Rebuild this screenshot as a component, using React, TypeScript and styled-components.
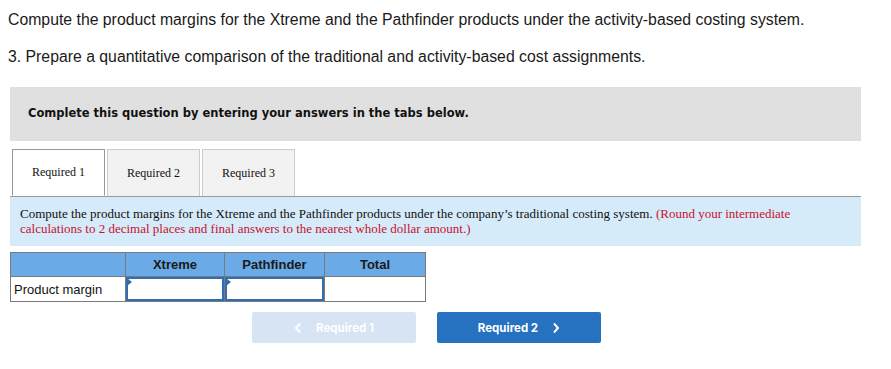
import styled, { createGlobalStyle } from 'styled-components';

const GlobalStyle = createGlobalStyle`
    body {
        margin: 0;
        background: #fff;
        color: #222;
    }
`;

const Page = styled.div`
    width: 851px;
    padding: 10px 30px 20px 10px;
`;

const Prompt = styled.p`
    margin: 0 0 17px -2px;
    font-family: "Liberation Sans", Arial, sans-serif;
    font-size: 15.8px;
    line-height: 20px;
    color: #1a1a1a;
`;

const Banner = styled.div`
    margin-top: 20px;
    height: 54px;
    background: #e0e0e0;
    display: flex;
    align-items: center;
    padding-left: 18px;
    padding-bottom: 2px;
    box-sizing: border-box;
    font-family: "DejaVu Sans", Verdana, sans-serif;
    font-weight: bold;
    font-size: 11.5px;
    color: #111;
`;

const TabBar = styled.div`
    display: flex;
    gap: 2px;
    margin-top: 8px;
    padding-left: 2px;
    border-bottom: 1px solid #999;
`;

const Tab = styled.div<{ $active?: boolean }>`
    width: 93px;
    height: 47px;
    box-sizing: border-box;
    display: flex;
    align-items: center;
    justify-content: center;
    font-family: "Liberation Serif", "Times New Roman", serif;
    font-size: 12px;
    color: #111;
    background: ${(p) => (p.$active ? '#fff' : '#f2f2f2')};
    border: 1px solid ${(p) => (p.$active ? '#999' : '#ccc')};
    border-bottom: ${(p) => (p.$active ? '1px solid #fff' : 'none')};
    margin-bottom: ${(p) => (p.$active ? '-1px' : '0')};
`;

const Instructions = styled.div`
    background: #d6ebf9;
    padding: 9px 10px 10px 10px;
    font-family: "Liberation Serif", "Times New Roman", serif;
    font-size: 13px;
    line-height: 15px;
    color: #111;
`;

const Hint = styled.span`
    color: #c8102e;
`;

const Table = styled.table`
    margin-top: 6px;
    border-collapse: collapse;
    font-family: "Liberation Sans", Arial, sans-serif;
    font-size: 13px;
`;

const HeadCell = styled.th<{ $w: number }>`
    width: ${(p) => p.$w}px;
    height: 24px;
    box-sizing: border-box;
    padding: 0;
    background: #6aaae6;
    border: 1.5px solid #7a7a7a;
    font-weight: bold;
    color: #1a1a1a;
    text-align: center;
`;

const LabelCell = styled.td`
    height: 24px;
    padding: 0 3px;
    border: 1.5px solid #7a7a7a;
    color: #111;
    white-space: nowrap;
`;

const Cell = styled.td`
    height: 24px;
    padding: 0;
    border: 1.5px solid #7a7a7a;
`;

const InputBox = styled.div`
    position: relative;
    height: 24px;
    box-sizing: border-box;
    border: 2px solid #2f6db5;

    &::before {
        content: '';
        position: absolute;
        top: -1px;
        left: -1px;
        border-top: 4px solid transparent;
        border-bottom: 4px solid transparent;
        border-left: 5px solid #2f6db5;
    }
`;

const NavRow = styled.div`
    display: flex;
    gap: 21px;
    margin-top: 10px;
    padding-left: 242px;
`;

const NavButton = styled.button<{ $disabled?: boolean }>`
    width: 164px;
    height: 31px;
    border: none;
    border-radius: 2px;
    display: flex;
    align-items: center;
    justify-content: center;
    gap: 14px;
    background: ${(p) => (p.$disabled ? '#d6e4f3' : '#2672c0')};
    color: #fff;
    font-family: "Inter", "Liberation Sans", sans-serif;
    font-weight: bold;
    font-size: 11.5px;
    cursor: ${(p) => (p.$disabled ? 'default' : 'pointer')};
`;

function Chevron({ left }: { left?: boolean }) {
    return (
        <svg width="8" height="12" viewBox="0 0 8 12">
            <path
                d={left ? 'M6 1.5 L2 6 L6 10.5' : 'M2 1.5 L6 6 L2 10.5'}
                fill="none"
                stroke="#fff"
                strokeWidth="2"
            />
        </svg>
    );
}

export default function App() {
    return (
        <Page>
            <GlobalStyle />
            <Prompt>Compute the product margins for the Xtreme and the Pathfinder products under the activity-based costing system.</Prompt>
            <Prompt>3. Prepare a quantitative comparison of the traditional and activity-based cost assignments.</Prompt>
            <Banner>Complete this question by entering your answers in the tabs below.</Banner>
            <TabBar>
                <Tab $active>Required 1</Tab>
                <Tab>Required 2</Tab>
                <Tab>Required 3</Tab>
            </TabBar>
            <Instructions>
                Compute the product margins for the Xtreme and the Pathfinder products under the company’s traditional costing system.{' '}
                <Hint>(Round your intermediate calculations to 2 decimal places and final answers to the nearest whole dollar amount.)</Hint>
            </Instructions>
            <Table>
                <thead>
                    <tr>
                        <HeadCell $w={115}></HeadCell>
                        <HeadCell $w={99}>Xtreme</HeadCell>
                        <HeadCell $w={100}>Pathfinder</HeadCell>
                        <HeadCell $w={101}>Total</HeadCell>
                    </tr>
                </thead>
                <tbody>
                    <tr>
                        <LabelCell>Product margin</LabelCell>
                        <Cell><InputBox /></Cell>
                        <Cell><InputBox /></Cell>
                        <Cell></Cell>
                    </tr>
                </tbody>
            </Table>
            <NavRow>
                <NavButton $disabled><Chevron left /> Required 1</NavButton>
                <NavButton>Required 2 <Chevron /></NavButton>
            </NavRow>
        </Page>
    );
}
